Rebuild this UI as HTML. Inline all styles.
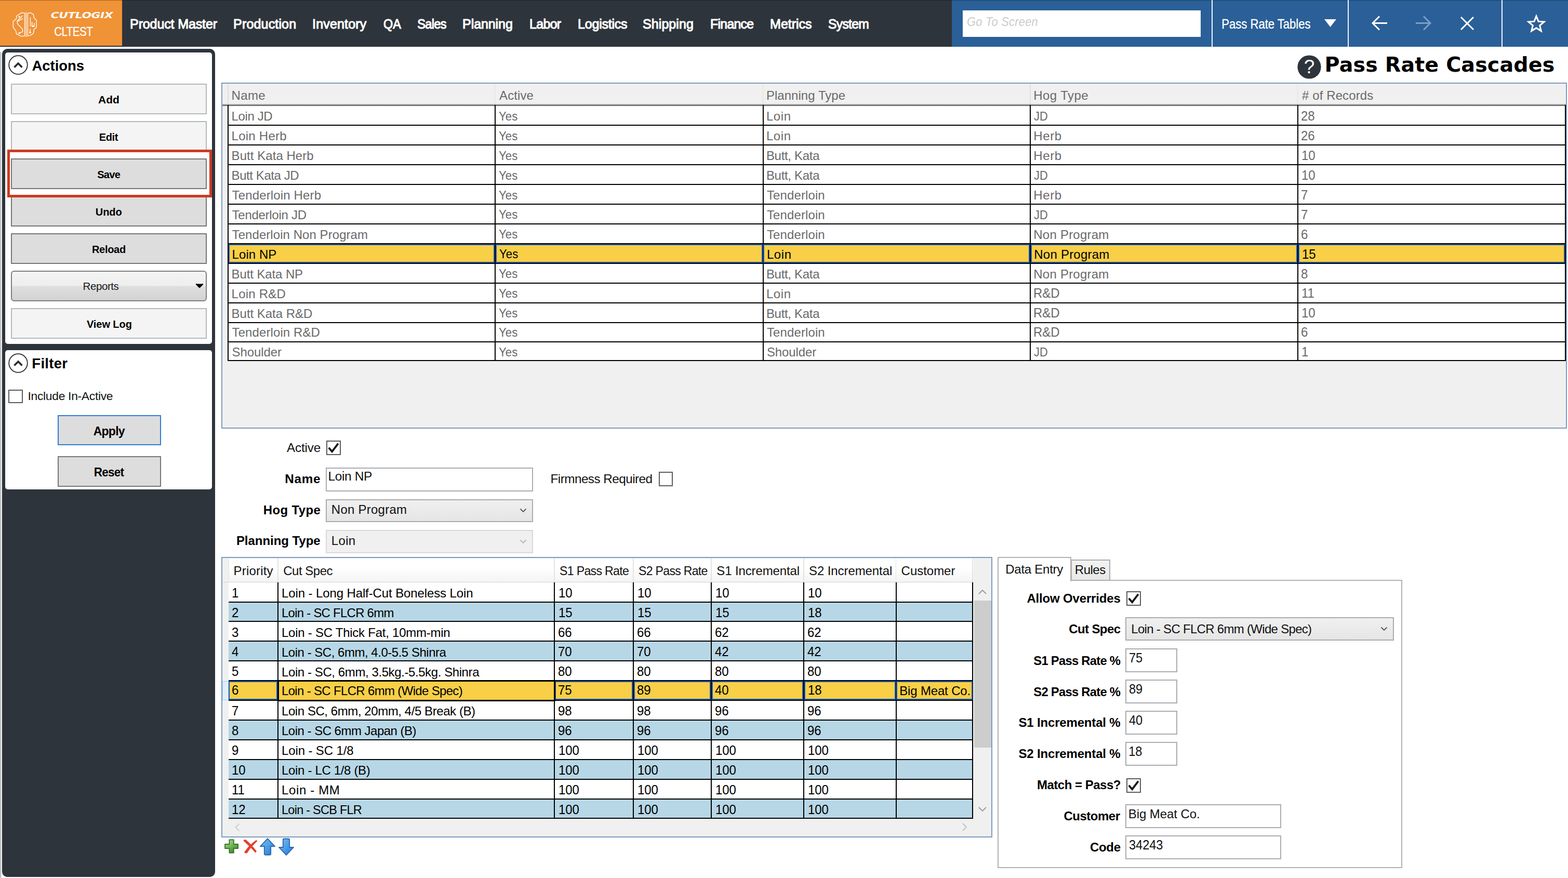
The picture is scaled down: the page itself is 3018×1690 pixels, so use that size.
<!DOCTYPE html>
<html lang="en"><head><meta charset="utf-8"><title>Pass Rate Cascades</title><style>
html,body{margin:0;padding:0;}
body{width:3018px;height:1690px;position:relative;overflow:hidden;background:#fff;font-family:"Liberation Sans",sans-serif;}
div,span,svg,label,h1,b,i{position:absolute;box-sizing:border-box;margin:0;padding:0;}
.t{white-space:pre;font-weight:400;font-style:normal;}
</style></head>
<body>
<div style="left:0.00px;top:0.00px;width:3018.00px;height:90.20px;background:#2e343b;"></div>
<div style="left:0.00px;top:0.00px;width:234.80px;height:88.40px;background:#f09236;"></div>
<div style="left:1832.00px;top:0.00px;width:1186.00px;height:90.20px;background:#2a5f98;"></div>
<div style="left:0.00px;top:0.00px;width:3018.00px;height:1.00px;background:rgba(0,0,0,0.33);"></div>
<div style="left:2331.50px;top:0.00px;width:2.00px;height:90.20px;background:#f2f6fa;"></div>
<div style="left:2593.50px;top:0.00px;width:2.00px;height:90.20px;background:#f2f6fa;"></div>
<div style="left:2890.00px;top:0.00px;width:2.00px;height:90.20px;background:#f2f6fa;"></div>
<svg style="left:24px;top:22.5px" width="48" height="48" viewBox="0 0 48 48" fill="none" stroke="#fff" stroke-opacity="0.93" stroke-width="1.5" stroke-linecap="round" stroke-linejoin="round">
<path d="M23.5 2.2L17.5 1.2L13.5 4.4L8 7.6L7.4 13L1.4 18.4L1.4 29.8L6.6 36.6L7.6 42L16.6 46.8L23.5 46.2z"/>
<path d="M29.4 2.2L34.8 1.6L40.4 5L41.2 10.6L46.2 16.4L46 29.6L41.4 33.6L40.4 41L35.6 44.6L29.4 46.4z"/>
<path d="M26.4 1v46.4"/>
<path d="M19 7.6L9.2 17.4L9.6 22.6L19.6 33.6L19.4 38.2L13.4 40.6M9.4 18.2L19.6 13"/>
<path d="M34.4 10.8v16.6M37.6 19.6v8.4h4.2v-6.4M34 33v6.4"/>
<circle cx="13" cy="9.6" r="1" fill="#fff"/><circle cx="13.2" cy="40.6" r="1.1" fill="#fff"/><circle cx="34" cy="39.6" r="1.1" fill="#fff"/><circle cx="39.6" cy="27.6" r="1" fill="#fff"/>
</svg>
<span class="t" style="left:97.90px;top:21.94px;font-size:16.5px;line-height:16.5px;color:#fff;font-family:'DejaVu Sans', sans-serif;font-weight:700;font-style:italic;letter-spacing:-0.34px;transform:scaleX(1.32);transform-origin:1.00px 50%;">CUTLOGIX</span>
<span class="t" style="left:103.90px;top:49.39px;font-size:24.7px;line-height:24.7px;color:#fff;letter-spacing:-0.75px;-webkit-text-stroke:0.35px #fff;transform:scaleX(0.839);transform-origin:1.00px 50%;">CLTEST</span>
<span class="t" style="left:249.70px;top:33.39px;font-size:26px;line-height:26px;color:#fff;letter-spacing:-0.17px;-webkit-text-stroke:1.15px #fff;transform:scaleX(0.965);transform-origin:2.00px 50%;">Product Master</span>
<span class="t" style="left:449.10px;top:33.39px;font-size:26px;line-height:26px;color:#fff;letter-spacing:0.13px;-webkit-text-stroke:1.15px #fff;transform:scaleX(0.965);transform-origin:2.00px 50%;">Production</span>
<span class="t" style="left:601.20px;top:33.39px;font-size:26px;line-height:26px;color:#fff;letter-spacing:0.14px;-webkit-text-stroke:1.15px #fff;transform:scaleX(0.965);transform-origin:2.00px 50%;">Inventory</span>
<span class="t" style="left:738.00px;top:33.39px;font-size:26px;line-height:26px;color:#fff;-webkit-text-stroke:1.15px #fff;transform:scaleX(0.9028);transform-origin:1.00px 50%;">QA</span>
<span class="t" style="left:803.10px;top:33.39px;font-size:26px;line-height:26px;color:#fff;letter-spacing:-0.75px;-webkit-text-stroke:1.15px #fff;transform:scaleX(0.9102);transform-origin:2.00px 50%;">Sales</span>
<span class="t" style="left:890.10px;top:33.39px;font-size:26px;line-height:26px;color:#fff;letter-spacing:-0.13px;-webkit-text-stroke:1.15px #fff;transform:scaleX(0.965);transform-origin:2.00px 50%;">Planning</span>
<span class="t" style="left:1018.60px;top:33.39px;font-size:26px;line-height:26px;color:#fff;letter-spacing:-0.75px;-webkit-text-stroke:1.15px #fff;transform:scaleX(0.9623);transform-origin:2.00px 50%;">Labor</span>
<span class="t" style="left:1111.50px;top:33.39px;font-size:26px;line-height:26px;color:#fff;letter-spacing:-0.27px;-webkit-text-stroke:1.15px #fff;transform:scaleX(0.965);transform-origin:2.00px 50%;">Logistics</span>
<span class="t" style="left:1237.20px;top:33.39px;font-size:26px;line-height:26px;color:#fff;letter-spacing:0.02px;-webkit-text-stroke:1.15px #fff;transform:scaleX(0.965);transform-origin:2.00px 50%;">Shipping</span>
<span class="t" style="left:1367.10px;top:33.39px;font-size:26px;line-height:26px;color:#fff;letter-spacing:-0.75px;-webkit-text-stroke:1.15px #fff;transform:scaleX(0.955);transform-origin:2.00px 50%;">Finance</span>
<span class="t" style="left:1481.70px;top:33.39px;font-size:26px;line-height:26px;color:#fff;letter-spacing:-0.05px;-webkit-text-stroke:1.15px #fff;transform:scaleX(0.965);transform-origin:2.00px 50%;">Metrics</span>
<span class="t" style="left:1593.80px;top:33.39px;font-size:26px;line-height:26px;color:#fff;letter-spacing:-0.75px;-webkit-text-stroke:1.15px #fff;transform:scaleX(0.9476);transform-origin:2.00px 50%;">System</span>
<div style="left:1853.00px;top:19.50px;width:458.00px;height:51.00px;background:#fff;"></div>
<span class="t" style="left:1861.00px;top:29.86px;font-size:24.5px;line-height:24.5px;color:#cbcbcb;font-style:italic;letter-spacing:0.29px;transform:scaleX(0.89);transform-origin:1.00px 50%;">Go To Screen</span>
<span class="t" style="left:2350.60px;top:33.81px;font-size:25.5px;line-height:25.5px;color:#fff;letter-spacing:-0.07px;-webkit-text-stroke:0.3px #fff;transform:scaleX(0.87);transform-origin:2.00px 50%;">Pass Rate Tables</span>
<svg style="left:2548px;top:36px" width="25" height="17" viewBox="0 0 25 17"><path d="M1 1h23L12.5 16z" fill="#fff"/></svg>
<svg style="left:2636px;top:26px" width="40" height="38" viewBox="0 0 40 38" fill="none" stroke="#fff" stroke-width="3" stroke-linecap="butt" stroke-linejoin="miter">
<path d="M34 18.5H7M19 5.5L6 18.5L19 31.5"/></svg>
<svg style="left:2719px;top:26px" width="40" height="38" viewBox="0 0 40 38" fill="none" stroke="#7d9fc6" stroke-width="3" stroke-linecap="butt" stroke-linejoin="miter">
<path d="M6 18.5H33M21 5.5L34 18.5L21 31.5"/></svg>
<svg style="left:2806px;top:28px" width="36" height="34" viewBox="0 0 36 34" fill="none" stroke="#fff" stroke-width="3">
<path d="M6 5L30 29M30 5L6 29"/></svg>
<svg style="left:2938.3px;top:26.6px" width="38" height="36" viewBox="0 0 42 40" fill="none" stroke="#fff" stroke-width="3.4" stroke-linejoin="miter">
<path d="M21 4.5l4.6 11.3 12.1 0.9-9.3 7.8 2.9 11.8L21 29.9l-10.3 6.4 2.9-11.8-9.3-7.8 12.1-0.9z"/></svg>
<svg style="left:2496px;top:105px" width="48" height="48" viewBox="0 0 48 48"><circle cx="24" cy="24" r="22.6" fill="#2e343b"/></svg>
<span class="t" style="left:2509.80px;top:110.18px;font-size:37px;line-height:37px;color:#fff;">?</span>
<h1 class="t" style="left:2549.60px;top:105.20px;font-size:39.6px;line-height:39.6px;color:#000;font-family:'DejaVu Sans', sans-serif;font-weight:700;letter-spacing:0.13px;">Pass Rate Cascades</h1>
<div style="left:0.00px;top:100.00px;width:0.80px;height:1590.00px;background:#8a9096;"></div>
<div style="left:1.90px;top:100.00px;width:0.80px;height:1590.00px;background:#c4c7ca;"></div>
<div style="left:4.20px;top:94.20px;width:410.30px;height:1594.20px;background:#2e343b;border-radius:10px;"></div>
<div style="left:10.40px;top:100.50px;width:397.60px;height:561.30px;background:#fff;border-radius:5px;"></div>
<div style="left:10.40px;top:674.40px;width:397.60px;height:267.50px;background:#fff;border-radius:5px;"></div>
<svg style="left:14.299999999999997px;top:104.3px" width="42" height="42" viewBox="0 0 42 42" fill="none" stroke="#2b2b2b">
<circle cx="21" cy="21" r="17.8" stroke-width="1.8" fill="#fff"/><path d="M13.5 25.5L21 18L28.5 25.5" stroke-width="3.6"/></svg>
<span class="t" style="left:61.50px;top:112.72px;font-size:27.5px;line-height:27.5px;color:#000;font-weight:700;letter-spacing:-0.05px;">Actions</span>
<svg style="left:14.299999999999997px;top:678.1px" width="42" height="42" viewBox="0 0 42 42" fill="none" stroke="#2b2b2b">
<circle cx="21" cy="21" r="17.8" stroke-width="1.8" fill="#fff"/><path d="M13.5 25.5L21 18L28.5 25.5" stroke-width="3.6"/></svg>
<span class="t" style="left:61.30px;top:686.32px;font-size:27.5px;line-height:27.5px;color:#000;font-weight:700;letter-spacing:0.30px;">Filter</span>
<div style="left:21.00px;top:160.60px;width:377.00px;height:59.20px;background:#f4f4f4;border:2px solid #b4b8bb;"></div>
<span class="t" style="left:190.20px;top:181.87px;font-size:20px;line-height:20px;color:#000;font-weight:700;transform:scaleX(1.0459);transform-origin:19.50px 50%;">Add</span>
<div style="left:21.00px;top:232.50px;width:377.00px;height:59.20px;background:#f4f4f4;border:2px solid #b4b8bb;"></div>
<span class="t" style="left:190.70px;top:253.77px;font-size:20px;line-height:20px;color:#000;font-weight:700;letter-spacing:-0.33px;">Edit</span>
<div style="left:21.00px;top:304.50px;width:377.00px;height:59.20px;background:#dddddd;border:2px solid #767676;"></div>
<span class="t" style="left:187.20px;top:325.77px;font-size:20px;line-height:20px;color:#000;font-weight:700;letter-spacing:-0.67px;">Save</span>
<div style="left:21.00px;top:376.50px;width:377.00px;height:59.20px;background:#dddddd;border:2px solid #767676;"></div>
<span class="t" style="left:183.70px;top:397.77px;font-size:20px;line-height:20px;color:#000;font-weight:700;">Undo</span>
<div style="left:21.00px;top:448.60px;width:377.00px;height:59.20px;background:#dddddd;border:2px solid #767676;"></div>
<span class="t" style="left:176.95px;top:469.87px;font-size:20px;line-height:20px;color:#000;font-weight:700;letter-spacing:-0.30px;">Reload</span>
<div style="left:21.00px;top:520.50px;width:377.00px;height:59.20px;border:2px solid #7f7f7f;border-radius:6px;background:linear-gradient(#f4f4f4 0%,#eeeeee 49%,#dfdfdf 51%,#d2d2d2 100%);"></div>
<span class="t" style="left:159.60px;top:541.25px;font-size:20.5px;line-height:20.5px;color:#1a1a1a;letter-spacing:-0.43px;">Reports</span>
<svg style="left:374.5px;top:545.3px" width="18" height="11" viewBox="0 0 20 12"><path d="M2.5 1.5L10 9l7.5-7.5" fill="#000" stroke="#000" stroke-width="2.4" stroke-linejoin="round"/></svg>
<div style="left:21.00px;top:592.50px;width:377.00px;height:59.20px;background:#f4f4f4;border:2px solid #b4b8bb;"></div>
<span class="t" style="left:166.95px;top:613.77px;font-size:20px;line-height:20px;color:#000;font-weight:700;letter-spacing:-0.07px;">View Log</span>
<div style="left:14.40px;top:288.00px;width:393.50px;height:91.60px;border:5px solid #cc3a23;"></div>
<div style="left:16.40px;top:750.20px;width:27.60px;height:26.00px;background:#fff;border:2px solid #5c5c5c;"></div>
<span class="t" style="left:53.50px;top:750.80px;font-size:22.8px;line-height:22.8px;color:#111;letter-spacing:-0.28px;">Include In-Active</span>
<div style="left:111.00px;top:799.00px;width:199.00px;height:58.20px;background:#dddddd;border:2px solid #2f7bd6;"></div>
<span class="t" style="left:179.70px;top:818.52px;font-size:23px;line-height:23px;color:#000;font-weight:700;letter-spacing:-0.75px;">Apply</span>
<div style="left:111.00px;top:878.40px;width:199.00px;height:58.60px;background:#dddddd;border:2px solid #767676;"></div>
<span class="t" style="left:180.20px;top:898.12px;font-size:23px;line-height:23px;color:#000;font-weight:700;letter-spacing:-0.75px;transform:scaleX(0.9737);transform-origin:30.50px 50%;">Reset</span>
<div style="left:425.90px;top:158.50px;width:2589.70px;height:666.70px;background:#f0f0f0;border:2px solid #7f9bbf;"></div>
<div style="left:438.30px;top:161.00px;width:1.50px;height:41.00px;background:#e0e0e0;"></div>
<div style="left:951.80px;top:161.00px;width:1.50px;height:41.00px;background:#e0e0e0;"></div>
<div style="left:1467.60px;top:161.00px;width:1.50px;height:41.00px;background:#e0e0e0;"></div>
<div style="left:1982.00px;top:161.00px;width:1.50px;height:41.00px;background:#e0e0e0;"></div>
<div style="left:2496.80px;top:161.00px;width:1.50px;height:41.00px;background:#e0e0e0;"></div>
<span class="t" style="left:445.60px;top:172.38px;font-size:24px;line-height:24px;color:#6a6a6a;letter-spacing:0.33px;">Name</span>
<span class="t" style="left:961.10px;top:172.38px;font-size:24px;line-height:24px;color:#6a6a6a;letter-spacing:0.10px;">Active</span>
<span class="t" style="left:1474.90px;top:172.38px;font-size:24px;line-height:24px;color:#6a6a6a;letter-spacing:0.04px;">Planning Type</span>
<span class="t" style="left:1989.30px;top:172.38px;font-size:24px;line-height:24px;color:#6a6a6a;letter-spacing:0.43px;">Hog Type</span>
<span class="t" style="left:2506.10px;top:172.38px;font-size:24px;line-height:24px;color:#6a6a6a;letter-spacing:0.09px;"># of Records</span>
<div style="left:438.30px;top:202.40px;width:2575.30px;height:493.00px;background:#fff;"></div>
<div style="left:438.30px;top:467.91px;width:2575.30px;height:39.93px;background:#f8cf46;"></div>
<div style="left:438.30px;top:240.33px;width:2575.30px;height:2.00px;background:#000;"></div>
<div style="left:438.30px;top:278.26px;width:2575.30px;height:2.00px;background:#000;"></div>
<div style="left:438.30px;top:316.19px;width:2575.30px;height:2.00px;background:#000;"></div>
<div style="left:438.30px;top:354.12px;width:2575.30px;height:2.00px;background:#000;"></div>
<div style="left:438.30px;top:392.05px;width:2575.30px;height:2.00px;background:#000;"></div>
<div style="left:438.30px;top:429.98px;width:2575.30px;height:2.00px;background:#000;"></div>
<div style="left:438.30px;top:467.91px;width:2575.30px;height:2.00px;background:#000;"></div>
<div style="left:438.30px;top:505.84px;width:2575.30px;height:2.00px;background:#000;"></div>
<div style="left:438.30px;top:543.77px;width:2575.30px;height:2.00px;background:#000;"></div>
<div style="left:438.30px;top:581.70px;width:2575.30px;height:2.00px;background:#000;"></div>
<div style="left:438.30px;top:620.00px;width:2575.30px;height:2.00px;background:#000;"></div>
<div style="left:438.30px;top:656.50px;width:2575.30px;height:2.00px;background:#000;"></div>
<div style="left:438.30px;top:693.40px;width:2575.30px;height:2.00px;background:#000;"></div>
<div style="left:428.00px;top:200.00px;width:2585.60px;height:4.40px;background:linear-gradient(#e4e4e4,#8a8a8a 45%,#5c5c5c);"></div>
<div style="left:438.30px;top:202.40px;width:2.00px;height:493.00px;background:#000;"></div>
<div style="left:951.80px;top:202.40px;width:2.00px;height:493.00px;background:#000;"></div>
<div style="left:1467.60px;top:202.40px;width:2.00px;height:493.00px;background:#000;"></div>
<div style="left:1982.00px;top:202.40px;width:2.00px;height:493.00px;background:#000;"></div>
<div style="left:2496.80px;top:202.40px;width:2.00px;height:493.00px;background:#000;"></div>
<div style="left:3011.60px;top:202.40px;width:2.00px;height:493.00px;background:#000;"></div>
<div style="left:440.10px;top:469.71px;width:511.90px;height:36.33px;border:2px solid #1f5cb8;"></div>
<div style="left:953.60px;top:469.71px;width:514.20px;height:36.33px;border:2px solid #1f5cb8;"></div>
<div style="left:1469.40px;top:469.71px;width:512.80px;height:36.33px;border:2px solid #1f5cb8;"></div>
<div style="left:1983.80px;top:469.71px;width:513.20px;height:36.33px;border:2px solid #1f5cb8;"></div>
<div style="left:2498.60px;top:469.71px;width:513.20px;height:36.33px;border:2px solid #1f5cb8;"></div>
<span class="t" style="left:445.60px;top:212.28px;font-size:24px;line-height:24px;color:#6a6a6a;letter-spacing:-0.38px;">Loin JD</span>
<span class="t" style="left:960.10px;top:211.78px;font-size:24.6px;line-height:24.6px;color:#6a6a6a;transform:scaleX(0.9);transform-origin:1.00px 50%;">Yes</span>
<span class="t" style="left:1474.90px;top:212.28px;font-size:24px;line-height:24px;color:#6a6a6a;letter-spacing:0.63px;">Loin</span>
<span class="t" style="left:1990.30px;top:212.28px;font-size:24px;line-height:24px;color:#6a6a6a;transform:scaleX(0.9074);transform-origin:1.00px 50%;">JD</span>
<span class="t" style="left:2504.40px;top:211.10px;font-size:25.4px;line-height:25.4px;color:#6a6a6a;letter-spacing:-0.10px;transform:scaleX(0.945);transform-origin:1.00px 50%;">28</span>
<span class="t" style="left:445.60px;top:250.21px;font-size:24px;line-height:24px;color:#6a6a6a;letter-spacing:0.24px;">Loin Herb</span>
<span class="t" style="left:960.10px;top:249.71px;font-size:24.6px;line-height:24.6px;color:#6a6a6a;transform:scaleX(0.9);transform-origin:1.00px 50%;">Yes</span>
<span class="t" style="left:1474.90px;top:250.21px;font-size:24px;line-height:24px;color:#6a6a6a;letter-spacing:0.63px;">Loin</span>
<span class="t" style="left:1989.30px;top:250.21px;font-size:24px;line-height:24px;color:#6a6a6a;letter-spacing:0.60px;">Herb</span>
<span class="t" style="left:2504.40px;top:249.03px;font-size:25.4px;line-height:25.4px;color:#6a6a6a;letter-spacing:-0.10px;transform:scaleX(0.945);transform-origin:1.00px 50%;">26</span>
<span class="t" style="left:445.60px;top:288.14px;font-size:24px;line-height:24px;color:#6a6a6a;letter-spacing:0.05px;">Butt Kata Herb</span>
<span class="t" style="left:960.10px;top:287.64px;font-size:24.6px;line-height:24.6px;color:#6a6a6a;transform:scaleX(0.9);transform-origin:1.00px 50%;">Yes</span>
<span class="t" style="left:1474.90px;top:288.14px;font-size:24px;line-height:24px;color:#6a6a6a;letter-spacing:-0.31px;">Butt, Kata</span>
<span class="t" style="left:1989.30px;top:288.14px;font-size:24px;line-height:24px;color:#6a6a6a;letter-spacing:0.60px;">Herb</span>
<span class="t" style="left:2505.20px;top:286.96px;font-size:25.4px;line-height:25.4px;color:#6a6a6a;letter-spacing:-0.10px;transform:scaleX(0.945);transform-origin:2.00px 50%;">10</span>
<span class="t" style="left:445.60px;top:326.07px;font-size:24px;line-height:24px;color:#6a6a6a;letter-spacing:-0.42px;">Butt Kata JD</span>
<span class="t" style="left:960.10px;top:325.57px;font-size:24.6px;line-height:24.6px;color:#6a6a6a;transform:scaleX(0.9);transform-origin:1.00px 50%;">Yes</span>
<span class="t" style="left:1474.90px;top:326.07px;font-size:24px;line-height:24px;color:#6a6a6a;letter-spacing:-0.31px;">Butt, Kata</span>
<span class="t" style="left:1990.30px;top:326.07px;font-size:24px;line-height:24px;color:#6a6a6a;transform:scaleX(0.9074);transform-origin:1.00px 50%;">JD</span>
<span class="t" style="left:2505.20px;top:324.89px;font-size:25.4px;line-height:25.4px;color:#6a6a6a;letter-spacing:-0.10px;transform:scaleX(0.945);transform-origin:2.00px 50%;">10</span>
<span class="t" style="left:446.60px;top:364.00px;font-size:24px;line-height:24px;color:#6a6a6a;letter-spacing:0.14px;">Tenderloin Herb</span>
<span class="t" style="left:960.10px;top:363.50px;font-size:24.6px;line-height:24.6px;color:#6a6a6a;transform:scaleX(0.9);transform-origin:1.00px 50%;">Yes</span>
<span class="t" style="left:1475.90px;top:364.00px;font-size:24px;line-height:24px;color:#6a6a6a;letter-spacing:0.12px;">Tenderloin</span>
<span class="t" style="left:1989.30px;top:364.00px;font-size:24px;line-height:24px;color:#6a6a6a;letter-spacing:0.60px;">Herb</span>
<span class="t" style="left:2504.40px;top:362.82px;font-size:25.4px;line-height:25.4px;color:#6a6a6a;letter-spacing:-0.10px;transform:scaleX(0.945);transform-origin:1.00px 50%;">7</span>
<span class="t" style="left:446.60px;top:401.93px;font-size:24px;line-height:24px;color:#6a6a6a;letter-spacing:-0.28px;">Tenderloin JD</span>
<span class="t" style="left:960.10px;top:401.43px;font-size:24.6px;line-height:24.6px;color:#6a6a6a;transform:scaleX(0.9);transform-origin:1.00px 50%;">Yes</span>
<span class="t" style="left:1475.90px;top:401.93px;font-size:24px;line-height:24px;color:#6a6a6a;letter-spacing:0.12px;">Tenderloin</span>
<span class="t" style="left:1990.30px;top:401.93px;font-size:24px;line-height:24px;color:#6a6a6a;transform:scaleX(0.9074);transform-origin:1.00px 50%;">JD</span>
<span class="t" style="left:2504.40px;top:400.75px;font-size:25.4px;line-height:25.4px;color:#6a6a6a;letter-spacing:-0.10px;transform:scaleX(0.945);transform-origin:1.00px 50%;">7</span>
<span class="t" style="left:446.60px;top:439.86px;font-size:24px;line-height:24px;color:#6a6a6a;letter-spacing:0.06px;">Tenderloin Non Program</span>
<span class="t" style="left:960.10px;top:439.36px;font-size:24.6px;line-height:24.6px;color:#6a6a6a;transform:scaleX(0.9);transform-origin:1.00px 50%;">Yes</span>
<span class="t" style="left:1475.90px;top:439.86px;font-size:24px;line-height:24px;color:#6a6a6a;letter-spacing:0.12px;">Tenderloin</span>
<span class="t" style="left:1989.30px;top:439.86px;font-size:24px;line-height:24px;color:#6a6a6a;letter-spacing:0.23px;">Non Program</span>
<span class="t" style="left:2504.40px;top:438.68px;font-size:25.4px;line-height:25.4px;color:#6a6a6a;letter-spacing:-0.10px;transform:scaleX(0.945);transform-origin:1.00px 50%;">6</span>
<span class="t" style="left:446.60px;top:477.79px;font-size:24px;line-height:24px;color:#000;letter-spacing:0.05px;">Loin NP</span>
<span class="t" style="left:961.10px;top:477.29px;font-size:24.6px;line-height:24.6px;color:#000;transform:scaleX(0.9);transform-origin:1.00px 50%;">Yes</span>
<span class="t" style="left:1475.90px;top:477.79px;font-size:24px;line-height:24px;color:#000;letter-spacing:0.63px;">Loin</span>
<span class="t" style="left:1990.30px;top:477.79px;font-size:24px;line-height:24px;color:#000;letter-spacing:0.23px;">Non Program</span>
<span class="t" style="left:2506.20px;top:476.61px;font-size:25.4px;line-height:25.4px;color:#000;letter-spacing:-0.10px;transform:scaleX(0.945);transform-origin:2.00px 50%;">15</span>
<span class="t" style="left:445.60px;top:515.72px;font-size:24px;line-height:24px;color:#6a6a6a;letter-spacing:-0.11px;">Butt Kata NP</span>
<span class="t" style="left:960.10px;top:515.22px;font-size:24.6px;line-height:24.6px;color:#6a6a6a;transform:scaleX(0.9);transform-origin:1.00px 50%;">Yes</span>
<span class="t" style="left:1474.90px;top:515.72px;font-size:24px;line-height:24px;color:#6a6a6a;letter-spacing:-0.31px;">Butt, Kata</span>
<span class="t" style="left:1989.30px;top:515.72px;font-size:24px;line-height:24px;color:#6a6a6a;letter-spacing:0.23px;">Non Program</span>
<span class="t" style="left:2504.40px;top:514.54px;font-size:25.4px;line-height:25.4px;color:#6a6a6a;letter-spacing:-0.10px;transform:scaleX(0.945);transform-origin:1.00px 50%;">8</span>
<span class="t" style="left:445.60px;top:553.65px;font-size:24px;line-height:24px;color:#6a6a6a;letter-spacing:0.21px;">Loin R&amp;D</span>
<span class="t" style="left:960.10px;top:553.15px;font-size:24.6px;line-height:24.6px;color:#6a6a6a;transform:scaleX(0.9);transform-origin:1.00px 50%;">Yes</span>
<span class="t" style="left:1474.90px;top:553.65px;font-size:24px;line-height:24px;color:#6a6a6a;letter-spacing:0.63px;">Loin</span>
<span class="t" style="left:1988.60px;top:552.47px;font-size:25.4px;line-height:25.4px;color:#6a6a6a;letter-spacing:-0.10px;transform:scaleX(0.945);transform-origin:2.00px 50%;">R&amp;D</span>
<span class="t" style="left:2505.20px;top:552.47px;font-size:25.4px;line-height:25.4px;color:#6a6a6a;letter-spacing:-0.10px;transform:scaleX(0.945);transform-origin:2.00px 50%;">11</span>
<span class="t" style="left:445.60px;top:591.58px;font-size:24px;line-height:24px;color:#6a6a6a;letter-spacing:-0.03px;">Butt Kata R&amp;D</span>
<span class="t" style="left:960.10px;top:591.08px;font-size:24.6px;line-height:24.6px;color:#6a6a6a;transform:scaleX(0.9);transform-origin:1.00px 50%;">Yes</span>
<span class="t" style="left:1474.90px;top:591.58px;font-size:24px;line-height:24px;color:#6a6a6a;letter-spacing:-0.31px;">Butt, Kata</span>
<span class="t" style="left:1988.60px;top:590.40px;font-size:25.4px;line-height:25.4px;color:#6a6a6a;letter-spacing:-0.10px;transform:scaleX(0.945);transform-origin:2.00px 50%;">R&amp;D</span>
<span class="t" style="left:2505.20px;top:590.40px;font-size:25.4px;line-height:25.4px;color:#6a6a6a;letter-spacing:-0.10px;transform:scaleX(0.945);transform-origin:2.00px 50%;">10</span>
<span class="t" style="left:446.60px;top:628.08px;font-size:24px;line-height:24px;color:#6a6a6a;letter-spacing:0.09px;">Tenderloin R&amp;D</span>
<span class="t" style="left:960.10px;top:627.58px;font-size:24.6px;line-height:24.6px;color:#6a6a6a;transform:scaleX(0.9);transform-origin:1.00px 50%;">Yes</span>
<span class="t" style="left:1475.90px;top:628.08px;font-size:24px;line-height:24px;color:#6a6a6a;letter-spacing:0.12px;">Tenderloin</span>
<span class="t" style="left:1988.60px;top:626.90px;font-size:25.4px;line-height:25.4px;color:#6a6a6a;letter-spacing:-0.10px;transform:scaleX(0.945);transform-origin:2.00px 50%;">R&amp;D</span>
<span class="t" style="left:2504.40px;top:626.90px;font-size:25.4px;line-height:25.4px;color:#6a6a6a;letter-spacing:-0.10px;transform:scaleX(0.945);transform-origin:1.00px 50%;">6</span>
<span class="t" style="left:446.60px;top:666.38px;font-size:24px;line-height:24px;color:#6a6a6a;letter-spacing:-0.09px;">Shoulder</span>
<span class="t" style="left:960.10px;top:665.88px;font-size:24.6px;line-height:24.6px;color:#6a6a6a;transform:scaleX(0.9);transform-origin:1.00px 50%;">Yes</span>
<span class="t" style="left:1475.90px;top:666.38px;font-size:24px;line-height:24px;color:#6a6a6a;letter-spacing:-0.09px;">Shoulder</span>
<span class="t" style="left:1990.30px;top:666.38px;font-size:24px;line-height:24px;color:#6a6a6a;transform:scaleX(0.9074);transform-origin:1.00px 50%;">JD</span>
<span class="t" style="left:2505.20px;top:665.20px;font-size:25.4px;line-height:25.4px;color:#6a6a6a;letter-spacing:-0.10px;transform:scaleX(0.945);transform-origin:2.00px 50%;">1</span>
<span class="t" style="left:552.00px;top:849.83px;font-size:24.3px;line-height:24.3px;color:#111;letter-spacing:-0.20px;">Active</span>
<div style="left:628.40px;top:848.20px;width:27.80px;height:27.80px;background:#fff;border:2px solid #5c5c5c;"></div>
<svg style="left:628.4px;top:848.2px" width="27.8" height="27.8" viewBox="0 0 27 27" fill="none" stroke="#1a1a1a" stroke-width="3.7"><path d="M4.6 13.4l6.2 7.2L22.3 5.4"/></svg>
<span class="t" style="left:548.20px;top:909.53px;font-size:24.3px;line-height:24.3px;color:#000;font-weight:700;letter-spacing:0.73px;">Name</span>
<div style="left:626.60px;top:900.20px;width:399.40px;height:45.60px;background:#fff;border:2px solid #a9acb3;"></div>
<span class="t" style="left:631.60px;top:905.08px;font-size:24.6px;line-height:24.6px;color:#111;letter-spacing:-0.45px;">Loin NP</span>
<span class="t" style="left:1059.50px;top:909.73px;font-size:24.3px;line-height:24.3px;color:#111;letter-spacing:-0.54px;">Firmness Required</span>
<div style="left:1267.60px;top:908.20px;width:27.80px;height:27.80px;background:#fff;border:2px solid #5c5c5c;"></div>
<span class="t" style="left:506.70px;top:969.58px;font-size:24px;line-height:24px;color:#000;font-weight:700;letter-spacing:0.39px;">Hog Type</span>
<div style="left:626.60px;top:960.90px;width:399.40px;height:44.60px;border:2px solid #acacac;background:linear-gradient(#f0f0f0,#e5e5e5);"></div>
<span class="t" style="left:637.80px;top:969.18px;font-size:24px;line-height:24px;color:#111;letter-spacing:0.25px;">Non Program</span>
<svg style="left:999.0px;top:976.2px" width="16" height="12" viewBox="0 0 16 12" fill="none" stroke="#555" stroke-width="1.8"><path d="M2.5 3.5L8 9l5.5-5.5"/></svg>
<span class="t" style="left:454.90px;top:1029.48px;font-size:24px;line-height:24px;color:#000;font-weight:700;letter-spacing:-0.04px;">Planning Type</span>
<div style="left:626.60px;top:1020.30px;width:399.40px;height:45.00px;background:#f0f0f0;border:2px solid #d9d9d9;"></div>
<span class="t" style="left:637.80px;top:1028.58px;font-size:24px;line-height:24px;color:#111;letter-spacing:0.33px;">Loin</span>
<svg style="left:999.0px;top:1035.8px" width="16" height="12" viewBox="0 0 16 12" fill="none" stroke="#b5b5b5" stroke-width="1.8"><path d="M2.5 3.5L8 9l5.5-5.5"/></svg>
<div style="left:426.40px;top:1072.20px;width:1483.20px;height:539.50px;background:#f0f0f0;border:2px solid #7f9bbf;"></div>
<div style="left:428.50px;top:1074.60px;width:1445.00px;height:47.00px;background:linear-gradient(#ffffff 0%,#ffffff 40%,#f3f3f3 100%);"></div>
<div style="left:428.50px;top:1074.60px;width:11.00px;height:47.00px;background:#f0f0f0;"></div>
<div style="left:439.50px;top:1074.60px;width:1.50px;height:46.00px;background:#e3e3e3;"></div>
<div style="left:534.20px;top:1074.60px;width:1.50px;height:46.00px;background:#e3e3e3;"></div>
<div style="left:1066.30px;top:1074.60px;width:1.50px;height:46.00px;background:#e3e3e3;"></div>
<div style="left:1218.10px;top:1074.60px;width:1.50px;height:46.00px;background:#e3e3e3;"></div>
<div style="left:1368.30px;top:1074.60px;width:1.50px;height:46.00px;background:#e3e3e3;"></div>
<div style="left:1546.00px;top:1074.60px;width:1.50px;height:46.00px;background:#e3e3e3;"></div>
<div style="left:1723.60px;top:1074.60px;width:1.50px;height:46.00px;background:#e3e3e3;"></div>
<div style="left:1871.40px;top:1074.60px;width:1.50px;height:46.00px;background:#e3e3e3;"></div>
<span class="t" style="left:449.50px;top:1087.28px;font-size:24px;line-height:24px;color:#111;letter-spacing:0.20px;">Priority</span>
<span class="t" style="left:545.20px;top:1087.28px;font-size:24px;line-height:24px;color:#111;letter-spacing:-0.47px;">Cut Spec</span>
<span class="t" style="left:1077.30px;top:1087.28px;font-size:24px;line-height:24px;color:#111;letter-spacing:-0.75px;transform:scaleX(0.966);transform-origin:1.00px 50%;">S1 Pass Rate</span>
<span class="t" style="left:1229.10px;top:1087.28px;font-size:24px;line-height:24px;color:#111;letter-spacing:-0.75px;transform:scaleX(0.9631);transform-origin:1.00px 50%;">S2 Pass Rate</span>
<span class="t" style="left:1379.30px;top:1087.28px;font-size:24px;line-height:24px;color:#111;letter-spacing:-0.12px;">S1 Incremental</span>
<span class="t" style="left:1557.00px;top:1087.28px;font-size:24px;line-height:24px;color:#111;letter-spacing:-0.09px;">S2 Incremental</span>
<span class="t" style="left:1734.60px;top:1087.28px;font-size:24px;line-height:24px;color:#111;letter-spacing:-0.03px;">Customer</span>
<div style="left:439.50px;top:1119.60px;width:1433.90px;height:456.60px;background:#fff;"></div>
<div style="left:439.50px;top:1157.53px;width:1433.90px;height:39.93px;background:#b7d7e6;"></div>
<div style="left:439.50px;top:1233.39px;width:1433.90px;height:39.93px;background:#b7d7e6;"></div>
<div style="left:439.50px;top:1309.25px;width:1433.90px;height:39.93px;background:#b7d7e6;"></div>
<div style="left:439.50px;top:1385.11px;width:1433.90px;height:39.93px;background:#b7d7e6;"></div>
<div style="left:439.50px;top:1460.97px;width:1433.90px;height:39.93px;background:#b7d7e6;"></div>
<div style="left:439.50px;top:1536.83px;width:1433.90px;height:39.37px;background:#b7d7e6;"></div>
<div style="left:439.50px;top:1309.25px;width:1433.90px;height:39.93px;background:#f8cf46;"></div>
<div style="left:439.50px;top:1157.53px;width:1433.90px;height:2.00px;background:#000;"></div>
<div style="left:439.50px;top:1195.46px;width:1433.90px;height:2.00px;background:#000;"></div>
<div style="left:439.50px;top:1233.39px;width:1433.90px;height:2.00px;background:#000;"></div>
<div style="left:439.50px;top:1271.32px;width:1433.90px;height:2.00px;background:#000;"></div>
<div style="left:439.50px;top:1309.25px;width:1433.90px;height:2.00px;background:#000;"></div>
<div style="left:439.50px;top:1347.18px;width:1433.90px;height:2.00px;background:#000;"></div>
<div style="left:439.50px;top:1385.11px;width:1433.90px;height:2.00px;background:#000;"></div>
<div style="left:439.50px;top:1423.04px;width:1433.90px;height:2.00px;background:#000;"></div>
<div style="left:439.50px;top:1460.97px;width:1433.90px;height:2.00px;background:#000;"></div>
<div style="left:439.50px;top:1498.90px;width:1433.90px;height:2.00px;background:#000;"></div>
<div style="left:439.50px;top:1536.83px;width:1433.90px;height:2.00px;background:#000;"></div>
<div style="left:439.50px;top:1574.20px;width:1433.90px;height:2.00px;background:#000;"></div>
<div style="left:534.20px;top:1121.40px;width:2.00px;height:454.80px;background:#000;"></div>
<div style="left:1066.30px;top:1121.40px;width:2.00px;height:454.80px;background:#000;"></div>
<div style="left:1218.10px;top:1121.40px;width:2.00px;height:454.80px;background:#000;"></div>
<div style="left:1368.30px;top:1121.40px;width:2.00px;height:454.80px;background:#000;"></div>
<div style="left:1546.00px;top:1121.40px;width:2.00px;height:454.80px;background:#000;"></div>
<div style="left:1723.60px;top:1121.40px;width:2.00px;height:454.80px;background:#000;"></div>
<div style="left:1871.40px;top:1121.40px;width:2.00px;height:454.80px;background:#000;"></div>
<div style="left:428.50px;top:1119.60px;width:1446.00px;height:1.90px;background:#d2d2d2;"></div>
<div style="left:440.10px;top:1311.05px;width:94.30px;height:36.33px;border:2px solid #1f5cb8;"></div>
<div style="left:1068.10px;top:1311.05px;width:150.20px;height:36.33px;border:2px solid #1f5cb8;"></div>
<div style="left:1219.90px;top:1311.05px;width:148.60px;height:36.33px;border:2px solid #1f5cb8;"></div>
<div style="left:1370.10px;top:1311.05px;width:176.10px;height:36.33px;border:2px solid #1f5cb8;"></div>
<div style="left:1547.80px;top:1311.05px;width:176.00px;height:36.33px;border:2px solid #1f5cb8;"></div>
<div style="left:1725.40px;top:1311.05px;width:146.20px;height:36.33px;border:2px solid #1f5cb8;"></div>
<div style="left:533.90px;top:1309.05px;width:534.70px;height:40.53px;border:3.2px solid #000;"></div>
<div style="left:428.20px;top:1310.85px;width:11.60px;height:36.93px;background:#dfeefa;border:1.2px solid #a6d2f2;"></div>
<span class="t" style="left:446.30px;top:1128.70px;font-size:25.4px;line-height:25.4px;color:#000;letter-spacing:-0.10px;transform:scaleX(0.945);transform-origin:2.00px 50%;">1</span>
<span class="t" style="left:542.00px;top:1129.88px;font-size:24px;line-height:24px;color:#000;letter-spacing:-0.11px;">Loin - Long Half-Cut Boneless Loin</span>
<span class="t" style="left:1074.90px;top:1128.70px;font-size:25.4px;line-height:25.4px;color:#000;letter-spacing:-0.10px;transform:scaleX(0.945);transform-origin:2.00px 50%;">10</span>
<span class="t" style="left:1226.70px;top:1128.70px;font-size:25.4px;line-height:25.4px;color:#000;letter-spacing:-0.10px;transform:scaleX(0.945);transform-origin:2.00px 50%;">10</span>
<span class="t" style="left:1376.90px;top:1128.70px;font-size:25.4px;line-height:25.4px;color:#000;letter-spacing:-0.10px;transform:scaleX(0.945);transform-origin:2.00px 50%;">10</span>
<span class="t" style="left:1554.60px;top:1128.70px;font-size:25.4px;line-height:25.4px;color:#000;letter-spacing:-0.10px;transform:scaleX(0.945);transform-origin:2.00px 50%;">10</span>
<span class="t" style="left:445.50px;top:1166.63px;font-size:25.4px;line-height:25.4px;color:#000;letter-spacing:-0.10px;transform:scaleX(0.945);transform-origin:1.00px 50%;">2</span>
<span class="t" style="left:542.00px;top:1167.81px;font-size:24px;line-height:24px;color:#000;letter-spacing:-0.75px;transform:scaleX(0.9988);transform-origin:2.00px 50%;">Loin - SC FLCR 6mm</span>
<span class="t" style="left:1074.90px;top:1166.63px;font-size:25.4px;line-height:25.4px;color:#000;letter-spacing:-0.10px;transform:scaleX(0.945);transform-origin:2.00px 50%;">15</span>
<span class="t" style="left:1226.70px;top:1166.63px;font-size:25.4px;line-height:25.4px;color:#000;letter-spacing:-0.10px;transform:scaleX(0.945);transform-origin:2.00px 50%;">15</span>
<span class="t" style="left:1376.90px;top:1166.63px;font-size:25.4px;line-height:25.4px;color:#000;letter-spacing:-0.10px;transform:scaleX(0.945);transform-origin:2.00px 50%;">15</span>
<span class="t" style="left:1554.60px;top:1166.63px;font-size:25.4px;line-height:25.4px;color:#000;letter-spacing:-0.10px;transform:scaleX(0.945);transform-origin:2.00px 50%;">18</span>
<span class="t" style="left:445.50px;top:1204.56px;font-size:25.4px;line-height:25.4px;color:#000;letter-spacing:-0.10px;transform:scaleX(0.945);transform-origin:1.00px 50%;">3</span>
<span class="t" style="left:542.00px;top:1205.74px;font-size:24px;line-height:24px;color:#000;letter-spacing:-0.25px;">Loin - SC Thick Fat, 10mm-min</span>
<span class="t" style="left:1074.10px;top:1204.56px;font-size:25.4px;line-height:25.4px;color:#000;letter-spacing:-0.10px;transform:scaleX(0.945);transform-origin:1.00px 50%;">66</span>
<span class="t" style="left:1225.90px;top:1204.56px;font-size:25.4px;line-height:25.4px;color:#000;letter-spacing:-0.10px;transform:scaleX(0.945);transform-origin:1.00px 50%;">66</span>
<span class="t" style="left:1376.10px;top:1204.56px;font-size:25.4px;line-height:25.4px;color:#000;letter-spacing:-0.10px;transform:scaleX(0.945);transform-origin:1.00px 50%;">62</span>
<span class="t" style="left:1553.80px;top:1204.56px;font-size:25.4px;line-height:25.4px;color:#000;letter-spacing:-0.10px;transform:scaleX(0.945);transform-origin:1.00px 50%;">62</span>
<span class="t" style="left:445.50px;top:1242.49px;font-size:25.4px;line-height:25.4px;color:#000;letter-spacing:-0.10px;transform:scaleX(0.945);transform-origin:1.00px 50%;">4</span>
<span class="t" style="left:542.00px;top:1243.67px;font-size:24px;line-height:24px;color:#000;letter-spacing:-0.48px;">Loin - SC, 6mm, 4.0-5.5 Shinra</span>
<span class="t" style="left:1074.10px;top:1242.49px;font-size:25.4px;line-height:25.4px;color:#000;letter-spacing:-0.10px;transform:scaleX(0.945);transform-origin:1.00px 50%;">70</span>
<span class="t" style="left:1225.90px;top:1242.49px;font-size:25.4px;line-height:25.4px;color:#000;letter-spacing:-0.10px;transform:scaleX(0.945);transform-origin:1.00px 50%;">70</span>
<span class="t" style="left:1376.10px;top:1242.49px;font-size:25.4px;line-height:25.4px;color:#000;letter-spacing:-0.10px;transform:scaleX(0.945);transform-origin:1.00px 50%;">42</span>
<span class="t" style="left:1553.80px;top:1242.49px;font-size:25.4px;line-height:25.4px;color:#000;letter-spacing:-0.10px;transform:scaleX(0.945);transform-origin:1.00px 50%;">42</span>
<span class="t" style="left:445.50px;top:1280.42px;font-size:25.4px;line-height:25.4px;color:#000;letter-spacing:-0.10px;transform:scaleX(0.945);transform-origin:1.00px 50%;">5</span>
<span class="t" style="left:542.00px;top:1281.60px;font-size:24px;line-height:24px;color:#000;letter-spacing:-0.41px;">Loin - SC, 6mm, 3.5kg.-5.5kg. Shinra</span>
<span class="t" style="left:1074.10px;top:1280.42px;font-size:25.4px;line-height:25.4px;color:#000;letter-spacing:-0.10px;transform:scaleX(0.945);transform-origin:1.00px 50%;">80</span>
<span class="t" style="left:1225.90px;top:1280.42px;font-size:25.4px;line-height:25.4px;color:#000;letter-spacing:-0.10px;transform:scaleX(0.945);transform-origin:1.00px 50%;">80</span>
<span class="t" style="left:1376.10px;top:1280.42px;font-size:25.4px;line-height:25.4px;color:#000;letter-spacing:-0.10px;transform:scaleX(0.945);transform-origin:1.00px 50%;">80</span>
<span class="t" style="left:1553.80px;top:1280.42px;font-size:25.4px;line-height:25.4px;color:#000;letter-spacing:-0.10px;transform:scaleX(0.945);transform-origin:1.00px 50%;">80</span>
<span class="t" style="left:445.50px;top:1316.35px;font-size:25.4px;line-height:25.4px;color:#000;letter-spacing:-0.10px;transform:scaleX(0.945);transform-origin:1.00px 50%;">6</span>
<span class="t" style="left:542.00px;top:1317.53px;font-size:24px;line-height:24px;color:#000;letter-spacing:-0.67px;">Loin - SC FLCR 6mm (Wide Spec)</span>
<span class="t" style="left:1074.10px;top:1316.35px;font-size:25.4px;line-height:25.4px;color:#000;letter-spacing:-0.10px;transform:scaleX(0.945);transform-origin:1.00px 50%;">75</span>
<span class="t" style="left:1225.90px;top:1316.35px;font-size:25.4px;line-height:25.4px;color:#000;letter-spacing:-0.10px;transform:scaleX(0.945);transform-origin:1.00px 50%;">89</span>
<span class="t" style="left:1376.10px;top:1316.35px;font-size:25.4px;line-height:25.4px;color:#000;letter-spacing:-0.10px;transform:scaleX(0.945);transform-origin:1.00px 50%;">40</span>
<span class="t" style="left:1554.60px;top:1316.35px;font-size:25.4px;line-height:25.4px;color:#000;letter-spacing:-0.10px;transform:scaleX(0.945);transform-origin:2.00px 50%;">18</span>
<span class="t" style="left:1731.20px;top:1317.53px;font-size:24px;line-height:24px;color:#000;letter-spacing:-0.16px;">Big Meat Co.</span>
<span class="t" style="left:445.50px;top:1356.28px;font-size:25.4px;line-height:25.4px;color:#000;letter-spacing:-0.10px;transform:scaleX(0.945);transform-origin:1.00px 50%;">7</span>
<span class="t" style="left:542.00px;top:1357.46px;font-size:24px;line-height:24px;color:#000;letter-spacing:-0.43px;">Loin SC, 6mm, 20mm, 4/5 Break (B)</span>
<span class="t" style="left:1074.10px;top:1356.28px;font-size:25.4px;line-height:25.4px;color:#000;letter-spacing:-0.10px;transform:scaleX(0.945);transform-origin:1.00px 50%;">98</span>
<span class="t" style="left:1225.90px;top:1356.28px;font-size:25.4px;line-height:25.4px;color:#000;letter-spacing:-0.10px;transform:scaleX(0.945);transform-origin:1.00px 50%;">98</span>
<span class="t" style="left:1376.10px;top:1356.28px;font-size:25.4px;line-height:25.4px;color:#000;letter-spacing:-0.10px;transform:scaleX(0.945);transform-origin:1.00px 50%;">96</span>
<span class="t" style="left:1553.80px;top:1356.28px;font-size:25.4px;line-height:25.4px;color:#000;letter-spacing:-0.10px;transform:scaleX(0.945);transform-origin:1.00px 50%;">96</span>
<span class="t" style="left:445.50px;top:1394.21px;font-size:25.4px;line-height:25.4px;color:#000;letter-spacing:-0.10px;transform:scaleX(0.945);transform-origin:1.00px 50%;">8</span>
<span class="t" style="left:542.00px;top:1395.39px;font-size:24px;line-height:24px;color:#000;letter-spacing:-0.51px;">Loin - SC 6mm Japan (B)</span>
<span class="t" style="left:1074.10px;top:1394.21px;font-size:25.4px;line-height:25.4px;color:#000;letter-spacing:-0.10px;transform:scaleX(0.945);transform-origin:1.00px 50%;">96</span>
<span class="t" style="left:1225.90px;top:1394.21px;font-size:25.4px;line-height:25.4px;color:#000;letter-spacing:-0.10px;transform:scaleX(0.945);transform-origin:1.00px 50%;">96</span>
<span class="t" style="left:1376.10px;top:1394.21px;font-size:25.4px;line-height:25.4px;color:#000;letter-spacing:-0.10px;transform:scaleX(0.945);transform-origin:1.00px 50%;">96</span>
<span class="t" style="left:1553.80px;top:1394.21px;font-size:25.4px;line-height:25.4px;color:#000;letter-spacing:-0.10px;transform:scaleX(0.945);transform-origin:1.00px 50%;">96</span>
<span class="t" style="left:445.50px;top:1432.14px;font-size:25.4px;line-height:25.4px;color:#000;letter-spacing:-0.10px;transform:scaleX(0.945);transform-origin:1.00px 50%;">9</span>
<span class="t" style="left:542.00px;top:1433.32px;font-size:24px;line-height:24px;color:#000;letter-spacing:-0.12px;">Loin - SC 1/8</span>
<span class="t" style="left:1074.90px;top:1432.14px;font-size:25.4px;line-height:25.4px;color:#000;letter-spacing:-0.10px;transform:scaleX(0.945);transform-origin:2.00px 50%;">100</span>
<span class="t" style="left:1226.70px;top:1432.14px;font-size:25.4px;line-height:25.4px;color:#000;letter-spacing:-0.10px;transform:scaleX(0.945);transform-origin:2.00px 50%;">100</span>
<span class="t" style="left:1376.90px;top:1432.14px;font-size:25.4px;line-height:25.4px;color:#000;letter-spacing:-0.10px;transform:scaleX(0.945);transform-origin:2.00px 50%;">100</span>
<span class="t" style="left:1554.60px;top:1432.14px;font-size:25.4px;line-height:25.4px;color:#000;letter-spacing:-0.10px;transform:scaleX(0.945);transform-origin:2.00px 50%;">100</span>
<span class="t" style="left:446.30px;top:1470.07px;font-size:25.4px;line-height:25.4px;color:#000;letter-spacing:-0.10px;transform:scaleX(0.945);transform-origin:2.00px 50%;">10</span>
<span class="t" style="left:542.00px;top:1471.25px;font-size:24px;line-height:24px;color:#000;letter-spacing:-0.33px;">Loin - LC 1/8 (B)</span>
<span class="t" style="left:1074.90px;top:1470.07px;font-size:25.4px;line-height:25.4px;color:#000;letter-spacing:-0.10px;transform:scaleX(0.945);transform-origin:2.00px 50%;">100</span>
<span class="t" style="left:1226.70px;top:1470.07px;font-size:25.4px;line-height:25.4px;color:#000;letter-spacing:-0.10px;transform:scaleX(0.945);transform-origin:2.00px 50%;">100</span>
<span class="t" style="left:1376.90px;top:1470.07px;font-size:25.4px;line-height:25.4px;color:#000;letter-spacing:-0.10px;transform:scaleX(0.945);transform-origin:2.00px 50%;">100</span>
<span class="t" style="left:1554.60px;top:1470.07px;font-size:25.4px;line-height:25.4px;color:#000;letter-spacing:-0.10px;transform:scaleX(0.945);transform-origin:2.00px 50%;">100</span>
<span class="t" style="left:446.30px;top:1508.00px;font-size:25.4px;line-height:25.4px;color:#000;letter-spacing:-0.10px;transform:scaleX(0.945);transform-origin:2.00px 50%;">11</span>
<span class="t" style="left:542.00px;top:1509.18px;font-size:24px;line-height:24px;color:#000;letter-spacing:0.64px;">Loin - MM</span>
<span class="t" style="left:1074.90px;top:1508.00px;font-size:25.4px;line-height:25.4px;color:#000;letter-spacing:-0.10px;transform:scaleX(0.945);transform-origin:2.00px 50%;">100</span>
<span class="t" style="left:1226.70px;top:1508.00px;font-size:25.4px;line-height:25.4px;color:#000;letter-spacing:-0.10px;transform:scaleX(0.945);transform-origin:2.00px 50%;">100</span>
<span class="t" style="left:1376.90px;top:1508.00px;font-size:25.4px;line-height:25.4px;color:#000;letter-spacing:-0.10px;transform:scaleX(0.945);transform-origin:2.00px 50%;">100</span>
<span class="t" style="left:1554.60px;top:1508.00px;font-size:25.4px;line-height:25.4px;color:#000;letter-spacing:-0.10px;transform:scaleX(0.945);transform-origin:2.00px 50%;">100</span>
<span class="t" style="left:446.30px;top:1545.93px;font-size:25.4px;line-height:25.4px;color:#000;letter-spacing:-0.10px;transform:scaleX(0.945);transform-origin:2.00px 50%;">12</span>
<span class="t" style="left:542.00px;top:1547.11px;font-size:24px;line-height:24px;color:#000;letter-spacing:-0.75px;transform:scaleX(0.9771);transform-origin:2.00px 50%;">Loin - SCB FLR</span>
<span class="t" style="left:1074.90px;top:1545.93px;font-size:25.4px;line-height:25.4px;color:#000;letter-spacing:-0.10px;transform:scaleX(0.945);transform-origin:2.00px 50%;">100</span>
<span class="t" style="left:1226.70px;top:1545.93px;font-size:25.4px;line-height:25.4px;color:#000;letter-spacing:-0.10px;transform:scaleX(0.945);transform-origin:2.00px 50%;">100</span>
<span class="t" style="left:1376.90px;top:1545.93px;font-size:25.4px;line-height:25.4px;color:#000;letter-spacing:-0.10px;transform:scaleX(0.945);transform-origin:2.00px 50%;">100</span>
<span class="t" style="left:1554.60px;top:1545.93px;font-size:25.4px;line-height:25.4px;color:#000;letter-spacing:-0.10px;transform:scaleX(0.945);transform-origin:2.00px 50%;">100</span>
<div style="left:1874.60px;top:1121.00px;width:33.00px;height:454.00px;background:#f0f0f0;"></div>
<div style="left:1874.60px;top:1156.30px;width:33.00px;height:283.00px;background:#cdcdcd;"></div>
<svg style="left:1881px;top:1132px" width="20" height="14" viewBox="0 0 20 14" fill="none" stroke="#9a9a9a" stroke-width="1.9"><path d="M3 11l7-7 7 7"/></svg>
<svg style="left:1881px;top:1551px" width="20" height="14" viewBox="0 0 20 14" fill="none" stroke="#9a9a9a" stroke-width="1.9"><path d="M3 3l7 7 7-7"/></svg>
<svg style="left:449px;top:1582px" width="14" height="20" viewBox="0 0 14 20" fill="none" stroke="#c6c6c6" stroke-width="1.7"><path d="M11.500 3.500l-7 7 7 7"/></svg>
<svg style="left:1850px;top:1582px" width="14" height="20" viewBox="0 0 14 20" fill="none" stroke="#c0c0c0" stroke-width="1.8"><path d="M3 3l7 7-7 7"/></svg>
<svg style="left:431px;top:1614px" width="30" height="30" viewBox="0 0 30 30"><defs><linearGradient id="gp" x1="0" y1="0" x2="0.6" y2="1"><stop offset="0" stop-color="#bce0aa"/><stop offset="0.5" stop-color="#7ab85e"/><stop offset="1" stop-color="#3f8c2e"/></linearGradient></defs><path d="M10.4 2.4h8.4v8.4h8.4v8.4h-8.400v8.4h-8.400v-8.400H2v-8.400h8.400z" fill="url(#gp)" stroke="#2f6f22" stroke-width="1.7" stroke-linejoin="round"/></svg>
<svg style="left:467px;top:1614px" width="30" height="30" viewBox="0 0 30 30" fill="#e2412a"><path d="M1.4 4.200C2.600 2 5.400 1.400 7.200 3C14 9 21 16.500 27 24.600L24.600 27.400C18 20 10 12 1.400 4.200z"/><path d="M26.400 2.800L28.200 5C21 11.500 14 19.500 9 27.400C7.400 29.200 4 28.600 3.200 26.200C9 17.500 17.500 9 26.400 2.800z"/></svg>
<svg style="left:499px;top:1612px" width="32" height="36" viewBox="0 0 32 36"><defs><linearGradient id="gb" x1="0" y1="0" x2="1" y2="1"><stop offset="0" stop-color="#7cc0f2"/><stop offset="0.55" stop-color="#479be6"/><stop offset="1" stop-color="#2a74cc"/></linearGradient></defs><path d="M16 2.200L30 17h-7.800v14.500q0 2-2 2h-8.400q-2 0-2-2V17H2z" fill="url(#gb)" stroke="#2a66ae" stroke-width="1.8" stroke-linejoin="round"/></svg>
<svg style="left:535px;top:1612px" width="32" height="36" viewBox="0 0 32 36"><path d="M16 33.800L30 19h-7.800V4.500q0-2-2-2h-8.400q-2 0-2 2V19H2z" fill="url(#gb)" stroke="#2a66ae" stroke-width="1.8" stroke-linejoin="round"/></svg>
<div style="left:1919.80px;top:1116.30px;width:779.20px;height:554.50px;background:#fff;border:2px solid #b2b2b2;"></div>
<div style="left:2060.90px;top:1077.30px;width:76.50px;height:41.00px;border:2px solid #acacac;background:linear-gradient(#f2f2f2,#e8e8e8);"></div>
<div style="left:1919.80px;top:1072.40px;width:142.00px;height:46.50px;background:#fff;border:2px solid #b2b2b2;border-bottom:none;"></div>
<span class="t" style="left:1935.30px;top:1083.78px;font-size:24px;line-height:24px;color:#111;letter-spacing:-0.26px;">Data Entry</span>
<span class="t" style="left:2068.80px;top:1084.68px;font-size:24px;line-height:24px;color:#111;letter-spacing:-0.50px;">Rules</span>
<span class="t" style="left:1976.40px;top:1139.58px;font-size:24px;line-height:24px;color:#000;font-weight:700;letter-spacing:-0.17px;">Allow Overrides</span>
<div style="left:2167.80px;top:1138.20px;width:27.80px;height:27.80px;background:#fff;border:2px solid #5c5c5c;"></div>
<svg style="left:2167.7999999999997px;top:1138.2px" width="27.8" height="27.8" viewBox="0 0 27 27" fill="none" stroke="#1a1a1a" stroke-width="3.7"><path d="M4.6 13.4l6.2 7.2L22.3 5.4"/></svg>
<span class="t" style="left:2057.20px;top:1199.48px;font-size:24px;line-height:24px;color:#000;font-weight:700;letter-spacing:-0.60px;">Cut Spec</span>
<div style="left:2166.10px;top:1188.20px;width:517.20px;height:45.00px;border:2px solid #acacac;background:linear-gradient(#f0f0f0,#e5e5e5);"></div>
<span class="t" style="left:2177.30px;top:1199.08px;font-size:24px;line-height:24px;color:#111;letter-spacing:-0.70px;">Loin - SC FLCR 6mm (Wide Spec)</span>
<svg style="left:2656.3px;top:1203.7px" width="16" height="12" viewBox="0 0 16 12" fill="none" stroke="#555" stroke-width="1.8"><path d="M2.5 3.5L8 9l5.5-5.5"/></svg>
<span class="t" style="left:1987.75px;top:1259.98px;font-size:24px;line-height:24px;color:#000;font-weight:700;letter-spacing:-0.75px;transform:scaleX(0.9925);transform-origin:168.25px 50%;">S1 Pass Rate %</span>
<div style="left:2166.10px;top:1248.20px;width:99.50px;height:45.60px;background:#fff;border:2px solid #a9acb3;"></div>
<span class="t" style="left:2172.70px;top:1254.10px;font-size:25.4px;line-height:25.4px;color:#111;letter-spacing:-0.10px;transform:scaleX(0.93);transform-origin:1.00px 50%;">75</span>
<span class="t" style="left:1987.75px;top:1319.68px;font-size:24px;line-height:24px;color:#000;font-weight:700;letter-spacing:-0.75px;transform:scaleX(0.9925);transform-origin:168.25px 50%;">S2 Pass Rate %</span>
<div style="left:2166.10px;top:1308.20px;width:99.50px;height:45.60px;background:#fff;border:2px solid #a9acb3;"></div>
<span class="t" style="left:2172.70px;top:1314.10px;font-size:25.4px;line-height:25.4px;color:#111;letter-spacing:-0.10px;transform:scaleX(0.93);transform-origin:1.00px 50%;">89</span>
<span class="t" style="left:1960.50px;top:1379.48px;font-size:24px;line-height:24px;color:#000;font-weight:700;letter-spacing:-0.17px;">S1 Incremental %</span>
<div style="left:2166.10px;top:1368.10px;width:99.50px;height:45.60px;background:#fff;border:2px solid #a9acb3;"></div>
<span class="t" style="left:2172.70px;top:1374.00px;font-size:25.4px;line-height:25.4px;color:#111;letter-spacing:-0.10px;transform:scaleX(0.93);transform-origin:1.00px 50%;">40</span>
<span class="t" style="left:1960.50px;top:1439.48px;font-size:24px;line-height:24px;color:#000;font-weight:700;letter-spacing:-0.17px;">S2 Incremental %</span>
<div style="left:2166.10px;top:1428.10px;width:99.50px;height:45.60px;background:#fff;border:2px solid #a9acb3;"></div>
<span class="t" style="left:2171.70px;top:1434.00px;font-size:25.4px;line-height:25.4px;color:#111;letter-spacing:-0.10px;transform:scaleX(0.93);transform-origin:2.00px 50%;">18</span>
<span class="t" style="left:1996.00px;top:1499.38px;font-size:24px;line-height:24px;color:#000;font-weight:700;letter-spacing:-0.50px;">Match = Pass?</span>
<div style="left:2167.80px;top:1498.00px;width:27.80px;height:27.80px;background:#fff;border:2px solid #5c5c5c;"></div>
<svg style="left:2167.7999999999997px;top:1498.0px" width="27.8" height="27.8" viewBox="0 0 27 27" fill="none" stroke="#1a1a1a" stroke-width="3.7"><path d="M4.6 13.4l6.2 7.2L22.3 5.4"/></svg>
<span class="t" style="left:2047.50px;top:1559.18px;font-size:24px;line-height:24px;color:#000;font-weight:700;letter-spacing:-0.50px;">Customer</span>
<div style="left:2166.10px;top:1548.10px;width:299.50px;height:45.60px;background:#fff;border:2px solid #a9acb3;"></div>
<span class="t" style="left:2171.70px;top:1555.18px;font-size:24px;line-height:24px;color:#111;letter-spacing:-0.07px;">Big Meat Co.</span>
<span class="t" style="left:2098.00px;top:1619.18px;font-size:24px;line-height:24px;color:#000;font-weight:700;letter-spacing:-0.33px;">Code</span>
<div style="left:2166.10px;top:1608.10px;width:299.50px;height:45.60px;background:#fff;border:2px solid #a9acb3;"></div>
<span class="t" style="left:2172.70px;top:1614.00px;font-size:25.4px;line-height:25.4px;color:#111;letter-spacing:-0.10px;transform:scaleX(0.93);transform-origin:1.00px 50%;">34243</span>
</body></html>
